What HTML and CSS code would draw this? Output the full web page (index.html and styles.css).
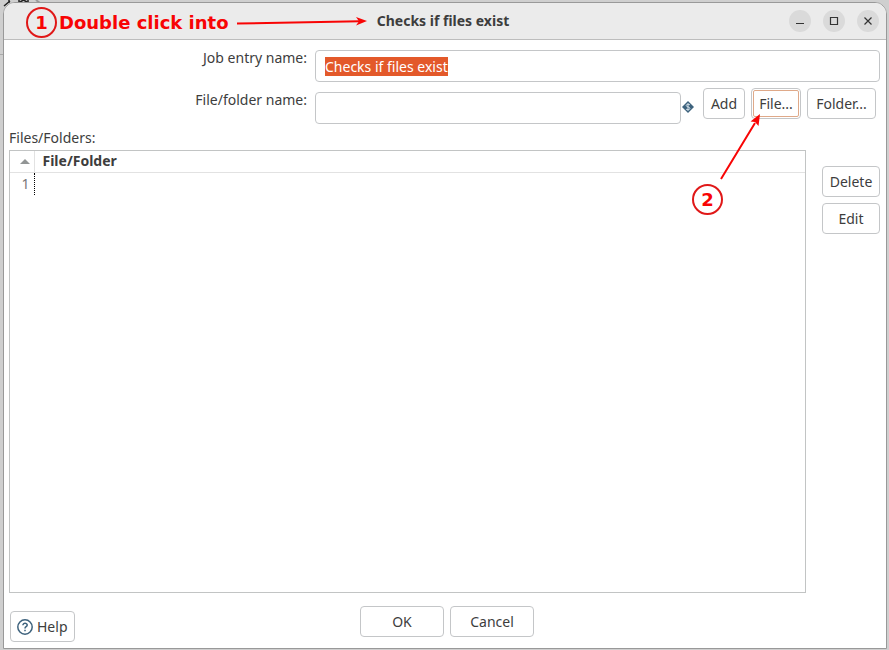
FILE: index.html
```html
<!DOCTYPE html>
<html lang="en">
<head>
<meta charset="utf-8">
<title>Checks if files exist</title>
<link rel="stylesheet" href="styles.css">
</head>
<body>
<svg class="backdrop" aria-hidden="true">
  <path d="M0 54.500H4" stroke="#aaa"/>
  <path d="M4 6L10 1M9 0V3M19 0V2M28 0V2M20 2L23.500 0L27 2" stroke="#222" stroke-width="1.500" fill="none"/>
  <path d="M36 0L40 3" stroke="#999" stroke-width="2"/>
</svg>
<main class="window">
  <header class="titlebar">
    <h1>Checks if files exist</h1>
    <div class="controls">
      <button aria-label="Minimize"><svg viewBox="0 0 22 22"><path d="M7 13.500h8"/></svg></button>
      <button aria-label="Maximize"><svg viewBox="0 0 22 22"><path d="M7.500 7.500h7v7h-7z"/></svg></button>
      <button aria-label="Close"><svg viewBox="0 0 22 22"><path d="M7.500 7.500l7 7m0-7l-7 7"/></svg></button>
    </div>
  </header>
  <form class="content" onsubmit="return false">
    <div class="row name-row">
      <label for="entry">Job entry name:</label>
      <input id="entry" type="text" value="Checks if files exist">
    </div>
    <div class="row file-row">
      <label for="path">File/folder name:</label>
      <input id="path" type="text">
      <svg class="variable" viewBox="0 0 12 12" aria-hidden="true"><path d="M6 0L12 6L6 12L0 6Z" fill="#3d627d"/><path d="M8 4C7.500 3 4.200 2.800 4.200 4.500C4.200 6.300 7.900 5.500 7.900 7.400C7.900 9.200 4.500 9 4 8M6 2.200V9.800" fill="none" stroke="#d5e1ea"/></svg>
      <div class="actions">
        <button class="btn">Add</button>
        <button class="btn current">File...</button>
        <button class="btn">Folder...</button>
      </div>
    </div>
    <div class="caption" id="list-label">Files/Folders:</div>
    <div class="list-area">
      <div class="list">
        <table aria-labelledby="list-label">
          <thead><tr><th class="index"><svg viewBox="0 0 10 5" aria-label="Sort"><path d="M0 5L5 0L10 5Z" fill="#929595"/></svg></th><th>File/Folder</th></tr></thead>
          <tbody><tr><td class="index">1</td><td></td></tr></tbody>
        </table>
      </div>
      <div class="side">
        <button class="btn">Delete</button>
        <button class="btn">Edit</button>
      </div>
    </div>
    <footer class="footer">
      <button class="btn help"><svg viewBox="0 0 16 16" aria-hidden="true"><circle cx="8" cy="8" r="7.200"/><path d="M5.900 6.200C5.900 3.600 10.200 3.700 10.200 6.100C10.200 7.700 8 7.700 8 9.400M8 10.800V12.200"/></svg>Help</button>
      <div class="confirm">
        <button class="btn">OK</button>
        <button class="btn">Cancel</button>
      </div>
    </footer>
  </form>
</main>
<div class="note step-one"><span class="badge">1</span>Double click into</div>
<div class="note step-two"><span class="badge">2</span></div>
<svg class="arrows" aria-hidden="true">
  <path d="M237 23.500L360 21.300M721 179L755 123" stroke="#f80404" stroke-width="2"/>
  <path d="M367 21L356 17L359 21.300L356 25.500ZM760 114L750.500 121.500L755 122L758.500 126Z" fill="#f80404"/>
</svg>
<script>
  const entry = document.getElementById("entry");
  entry.focus();
  entry.select();
</script>
</body>
</html>
```
FILE: styles.css
```css
* { box-sizing: border-box; }

body {
  margin: 0;
  height: 100vh;
  padding: 2px 2px 1px 3px;
  display: flex;
  background: #cfcfcf;
  color: #3d3d3d;
  font: 14px/16px "Noto Sans", sans-serif;
  overflow: hidden;
}

button, input { font: inherit; color: inherit; margin: 0; }

.backdrop { position: absolute; inset: 0; width: 100%; height: 60px; }

.window {
  position: relative;
  flex: 1;
  display: flex;
  flex-direction: column;
  border: 1px solid #999;
  border-radius: 12px 12px 0 0;
  background: #fff;
  overflow: hidden;
}

.titlebar {
  display: grid;
  grid-template-columns: 1fr auto 1fr;
  align-items: center;
  height: 37px;
  padding: 0 7px 0 3px;
  background: #ebebeb;
  border-bottom: 1px solid #bdbdbd;
}
.titlebar h1 { grid-column: 2; margin: 0; font-size: 14px; }
.controls { display: flex; justify-content: flex-end; gap: 12px; }
.controls button {
  width: 22px;
  height: 22px;
  padding: 0;
  border: 0;
  border-radius: 50%;
  background: #dadada;
}
.controls svg { display: block; fill: none; stroke: #333; stroke-width: 1.2; }

.content {
  flex: 1;
  display: flex;
  flex-direction: column;
  padding: 10px 6px 6px 5px;
}

.row { display: flex; align-items: flex-start; }
.row label { width: 298px; margin-right: 8px; text-align: right; }
.row input {
  flex: 1;
  min-width: 0;
  height: 32px;
  padding: 0 9px;
  border: 1px solid #c4c6c8;
  border-radius: 4px;
  background: #fff;
  outline: none;
}
.row input::selection { background: #e3592a; color: #fff; }
.name-row { margin-bottom: 6px; }
.file-row { padding-right: 4px; }
.file-row label, .file-row input { margin-top: 4px; }
.variable { width: 12px; height: 12px; margin: 13px 9px 0 1px; }
.actions { display: grid; grid-template-columns: 42px 50px 69px; gap: 6px; }

.btn {
  height: 31px;
  padding: 0 6px;
  border: 1px solid #c4c6c8;
  border-radius: 4px;
  background: #fff;
}
.actions .btn, .side .btn { padding: 0; }
.current { outline: 1px solid #dfa989; outline-offset: -3px; }

.caption { margin: 6px 0 4px; }
.list-area { flex: 1; display: flex; gap: 16px; }
.list { flex: 1; border: 1px solid #c2c4c4; }
table { width: 100%; border-collapse: collapse; }
th, td { padding: 0 8px; text-align: left; }
th { height: 21px; border-bottom: 1px solid #e2e2e2; }
td { height: 23px; }
.index { width: 24px; padding: 0 4px; text-align: right; color: #777; }
th.index { border-right: 1px solid #e2e2e2; }
td.index { border-right: 1px dotted #000; }
.index svg { display: block; width: 10px; margin-left: auto; }
.side { display: flex; flex-direction: column; gap: 6px; width: 58px; padding-top: 16px; }

.footer {
  display: grid;
  grid-template-columns: 1fr auto 1fr;
  align-items: start;
  padding: 13px 0 0 1px;
}
.help { justify-self: start; display: flex; align-items: center; gap: 4px; margin-top: 5px; }
.help svg { width: 16px; fill: none; stroke: #3d627d; stroke-width: 1.5; }
.confirm { display: flex; gap: 6px; padding-left: 4px; }
.confirm .btn { width: 84px; }

.note {
  position: absolute;
  display: flex;
  align-items: center;
  gap: 2px;
  color: #f80404;
  font: bold 18px/20px "DejaVu Sans", sans-serif;
  white-space: nowrap;
}
.badge {
  width: 31px;
  height: 31px;
  border: 2px solid #e01818;
  border-radius: 50%;
  line-height: 27px;
  text-align: center;
}
.step-one { left: 26px; top: 7px; }
.step-two { left: 692px; top: 184px; }
.arrows { position: absolute; inset: 0; width: 100%; height: 100%; pointer-events: none; }
```
